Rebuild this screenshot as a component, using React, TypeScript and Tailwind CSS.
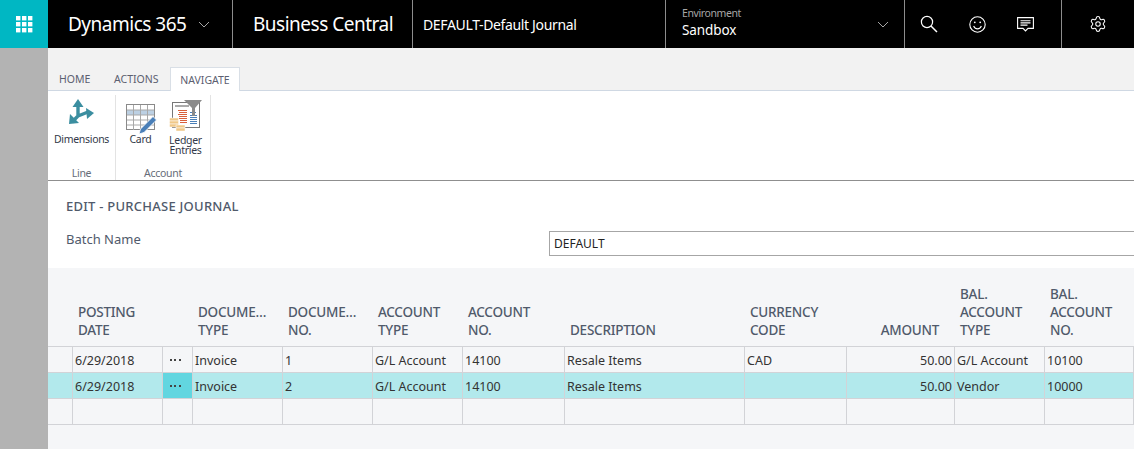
import type { ReactNode } from "react";
import { Settings } from "lucide-react";

const uiFont = "font-['Noto_Sans','Open_Sans',sans-serif]";
const dinFont = "font-['Roboto','Liberation_Sans',sans-serif]";

const columns = "grid grid-cols-[25px_90px_30px_90px_90px_90px_102px_180px_102px_108px_90px_89px]";

const headers: { lines: string[]; right?: boolean }[] = [
  { lines: [] },
  { lines: ["POSTING", "DATE"] },
  { lines: [] },
  { lines: ["DOCUME…", "TYPE"] },
  { lines: ["DOCUME…", "NO."] },
  { lines: ["ACCOUNT", "TYPE"] },
  { lines: ["ACCOUNT", "NO."] },
  { lines: ["DESCRIPTION"] },
  { lines: ["CURRENCY", "CODE"] },
  { lines: ["AMOUNT"], right: true },
  { lines: ["BAL.", "ACCOUNT", "TYPE"] },
  { lines: ["BAL.", "ACCOUNT", "NO."] },
];

const rows = [
  { date: "6/29/2018", docType: "Invoice", docNo: "1", accType: "G/L Account", accNo: "14100", desc: "Resale Items", cur: "CAD", amount: "50.00", balType: "G/L Account", balNo: "10100", selected: false },
  { date: "6/29/2018", docType: "Invoice", docNo: "2", accType: "G/L Account", accNo: "14100", desc: "Resale Items", cur: "", amount: "50.00", balType: "Vendor", balNo: "10000", selected: true },
  { date: "", docType: "", docNo: "", accType: "", accNo: "", desc: "", cur: "", amount: "", balType: "", balNo: "", selected: false },
];

function Waffle() {
  return (
    <svg width="17" height="17" viewBox="0 0 17 17" fill="white">
      {[0, 6, 12].map((y) =>
        [0, 6, 12].map((x) => <rect key={`${x}-${y}`} x={x} y={y} width="4.4" height="4.4" />)
      )}
    </svg>
  );
}

function Chevron({ className }: { className: string }) {
  return (
    <svg width="12" height="7" viewBox="0 0 12 7" fill="none" stroke="currentColor" className={className}>
      <path d="M1 1l5 5 5-5" />
    </svg>
  );
}

function SearchIcon() {
  return (
    <svg width="18" height="18" viewBox="0 0 18 18" fill="none" stroke="white" strokeWidth="1.2">
      <circle cx="7" cy="7" r="5.6" />
      <path d="M11 11l6 6" strokeWidth="1.5" />
    </svg>
  );
}

function SmileIcon() {
  return (
    <svg width="17" height="17" viewBox="0 0 17 17" fill="none" stroke="white" strokeWidth="1.1">
      <circle cx="8.5" cy="8.5" r="7.7" />
      <circle cx="5.8" cy="6.3" r="0.9" fill="white" stroke="none" />
      <circle cx="11.2" cy="6.3" r="0.9" fill="white" stroke="none" />
      <path d="M4.6 10c1 2 2.4 2.9 3.9 2.9s2.9-.9 3.9-2.9" />
    </svg>
  );
}

function ChatIcon() {
  return (
    <svg width="17" height="15" viewBox="0 0 17 15" fill="none" stroke="white" strokeWidth="1.1">
      <path d="M.6.6h15.8v10.8h-5.4l-2.5 2.6-2.5-2.6H.6z" />
      <path d="M3.5 3.7h10M3.5 5.9h10M3.5 8.1h7" />
    </svg>
  );
}

function DimensionsIcon() {
  return (
    <svg width="28" height="28" viewBox="0 0 28 28" fill="#3b8ea0" stroke="none">
      <path d="M10 18V7M10 18l10-4M10 18l-6 6" stroke="#3b8ea0" strokeWidth="3.4" fill="none" />
      <path d="M10 1l-5.500 8h11z" />
      <path d="M26 15l-8-5 1 11z" />
      <path d="M1 26l1-10 9 9z" />
    </svg>
  );
}

function CardIcon() {
  return (
    <svg width="32" height="31" viewBox="0 0 32 31">
      <rect x="0.5" y="0.5" width="28" height="25" fill="white" stroke="#8a8a8a" />
      <rect x="1" y="6" width="27" height="5" fill="#bcd0e3" />
      <path d="M1 6h27M1 11h27M1 16h27M1 21h27M7.5 1v25M14.5 1v25M21.5 1v25" stroke="#a8a8a8" strokeWidth="1" fill="none" />
      <path d="M13 30l1.500-5L27 12.500l3.500 3.500L18 28.500z" fill="#4a7fb8" stroke="white" strokeWidth="0.8" />
    </svg>
  );
}

function LedgerIcon() {
  return (
    <svg width="34" height="32" viewBox="0 0 34 32">
      <rect x="3.5" y="2.5" width="27" height="25" fill="white" stroke="#777" />
      <path d="M6 6h14" stroke="#aaa" strokeWidth="2" />
      <path d="M9 10.500h9M10 12.500h8M9 14.500h9M10 16.500h8M10 18.500h8M11 20.500h7M11 22.500h7" stroke="#d9603b" strokeWidth="1" />
      <path d="M21 12.500h6M21 15.500h7M21 17.500h7M21 19.500h7M21 21.500h7M21 23.500h7" stroke="#4a7fb8" strokeWidth="1" />
      <path d="M15 0h18l-7 8v8h-3V8z" fill="#8a8a8a" />
      <g fill="#f0c887" stroke="white" strokeWidth="0.5">
        <rect x="0.5" y="18" width="9" height="3" />
        <rect x="0.5" y="21" width="9" height="3" />
        <rect x="0.5" y="24" width="9" height="3" />
        <rect x="7" y="25" width="9" height="3" />
        <rect x="7" y="28" width="9" height="3" />
      </g>
    </svg>
  );
}

function Cell({ children, right }: { children?: ReactNode; right?: boolean }) {
  return (
    <div
      className={`h-[26px] border-r border-b border-[#d2d3d7] px-[2px] pt-[4px] leading-[20px] whitespace-nowrap overflow-hidden ${right ? "text-right" : ""}`}
    >
      {children}
    </div>
  );
}

export default function App() {
  return (
    <div className={`w-[1134px] h-[449px] flex overflow-hidden bg-white ${uiFont}`}>
      {/* Left rail */}
      <div className="w-12 shrink-0 flex flex-col bg-[#b3b3b3]">
        <div className="h-12 bg-[#00b7c3] flex items-center justify-center">
          <Waffle />
        </div>
      </div>

      <div className="flex-1 min-w-0 flex flex-col">
        {/* Top bar */}
        <div className="h-12 shrink-0 bg-black text-white flex items-stretch">
          <div className="w-[185px] border-r border-[#8c8c8c] flex items-center pl-5">
            <span className="text-[19px] tracking-[-0.5px] leading-none pt-[1px] mr-[12px]">Dynamics 365</span>
            <Chevron className="text-[#a6a6a6]" />
          </div>
          <div className="w-[180px] border-r border-[#8c8c8c] flex items-center pl-5 pt-[1px] text-[19px] tracking-[-0.5px]">Business Central</div>
          <div className="w-[253px] border-r border-[#8c8c8c] flex items-center pl-[10px] text-[14px] tracking-[-0.35px]">DEFAULT-Default Journal</div>
          <div className="w-[239px] border-r border-[#8c8c8c] flex items-center pl-4 pr-[15px] justify-between">
            <div className="flex flex-col pb-[3px]">
              <span className="text-[10.5px] tracking-[-0.4px] leading-[14px] text-[#a6a6a6]">Environment</span>
              <span className="text-[13.5px] tracking-[-0.1px] leading-[19px] mt-[1px]">Sandbox</span>
            </div>
            <Chevron className="text-[#a6a6a6]" />
          </div>
          <div className="w-[157px] border-r border-[#8c8c8c] flex items-center pl-[15px] gap-[31px]">
            <SearchIcon />
            <SmileIcon />
            <ChatIcon />
          </div>
          <div className="flex-1 flex items-center pl-[27px]">
            <Settings size={18} strokeWidth={1.4} />
          </div>
        </div>

        {/* Ribbon tabs */}
        <div className="h-[43px] shrink-0 bg-[#f2f2f2] border-b border-[#cfd8e3] flex items-end pl-[3px] text-[10.5px] text-[#5c6070]">
          <div className="w-[40px] h-[23px] pt-[4px] pl-2 leading-[16px]">HOME</div>
          <div className="w-[79px] h-[23px] pt-[4px] pl-[23px] leading-[16px]">ACTIONS</div>
          <div className="w-[70px] h-[24px] -mb-px pt-[4px] text-center leading-[16px] bg-white border-t border-x border-[#d9dfe6]">NAVIGATE</div>
        </div>

        {/* Ribbon content */}
        <div className="h-[90px] shrink-0 bg-white border-b border-[#8f8f8f] pt-1 flex text-[10.5px] tracking-[-0.3px] text-[#333a4a]">
          <div className="w-[68px] h-[85px] border-r border-[#e3e3e3] flex flex-col items-center">
            <div className="mt-[3px] h-[29px] flex justify-center">
              <DimensionsIcon />
            </div>
            <span className="mt-[6px] leading-[13px]">Dimensions</span>
            <span className="mt-auto text-[#666c78] leading-[14px]">Line</span>
          </div>
          <div className="w-[95px] h-[85px] border-r border-[#e3e3e3] flex flex-col items-center">
            <div className="flex-1 flex gap-[11px] pl-[2px]">
              <div className="flex flex-col items-center">
                <div className="mt-[9px] h-[31px]"><CardIcon /></div>
                <span className="leading-[13px] -mt-[2px] -ml-[2px]">Card</span>
              </div>
              <div className="flex flex-col items-center">
                <div className="mt-[5px] h-[32px]"><LedgerIcon /></div>
                <span className="leading-[10px] text-center mt-[3px]">Ledger<br />Entries</span>
              </div>
            </div>
            <span className="text-[#666c78] leading-[14px]">Account</span>
          </div>
        </div>

        {/* Page header */}
        <div className="h-[87px] shrink-0 bg-white pl-[18px]">
          <div className={`pt-[16px] text-[13px] font-medium leading-[18px] tracking-[0.25px] text-[#505a6b] ${dinFont}`}>EDIT - PURCHASE JOURNAL</div>
          <div className="mt-[16px] flex items-center h-[24px]">
            <span className="w-[483px] shrink-0 -mt-[6px] text-[13px] text-[#505a6b]">Batch Name</span>
            <div className="flex-1 h-[25px] border border-[#a6a6a6] border-r-0 pl-1 text-[12px] leading-[24px] text-[#222]">DEFAULT</div>
          </div>
        </div>

        {/* Journal lines */}
        <div className="flex-1 bg-[#f5f6f8]">
          <div className={`${columns} h-[79px] border-b border-[#d2d3d7] items-end pb-[7px] text-[13.5px] font-medium leading-[18px] tracking-[-0.25px] text-[#505a6b] ${dinFont}`}>
            {headers.map((h, i) => (
              <div key={i} className={h.right ? "text-right pr-[16px]" : "pl-[5px]"}>
                {h.lines.map((l) => (
                  <div key={l}>{l}</div>
                ))}
              </div>
            ))}
          </div>
          {rows.map((r, i) => (
            <div key={i} className={`${columns} text-[12.5px] text-[#333] ${r.selected ? "bg-[#b2e9ec]" : ""}`}>
              <Cell />
              <Cell>{r.date}</Cell>
              <div className={`h-[26px] border-r border-b border-[#d2d3d7] flex items-center justify-center gap-[2.5px] pr-[5px] ${r.selected ? "bg-[#62d6e0]" : ""}`}>
                {r.date &&
                  [0, 1, 2].map((d) => <span key={d} className="w-[2px] h-[2px] bg-[#444]" />)}
              </div>
              <Cell>{r.docType}</Cell>
              <Cell>{r.docNo}</Cell>
              <Cell>{r.accType}</Cell>
              <Cell>{r.accNo}</Cell>
              <Cell>{r.desc}</Cell>
              <Cell>{r.cur}</Cell>
              <Cell right>{r.amount}</Cell>
              <Cell>{r.balType}</Cell>
              <Cell>{r.balNo}</Cell>
            </div>
          ))}
        </div>
      </div>
    </div>
  );
}
